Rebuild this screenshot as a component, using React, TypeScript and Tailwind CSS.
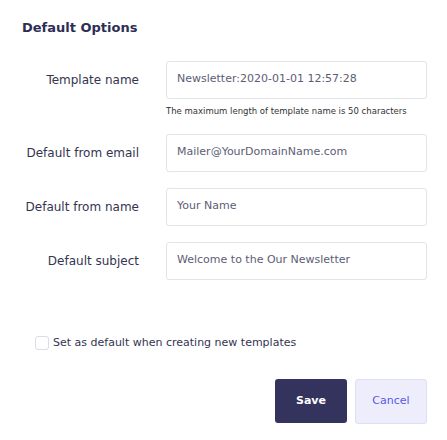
import React from 'react'

const fields = [
  { label: 'Template name', value: 'Newsletter:2020-01-01 12:57:28' },
  { label: 'Default from email', value: 'Mailer@YourDomainName.com' },
  { label: 'Default from name', value: 'Your Name' },
  { label: 'Default subject', value: 'Welcome to the Our Newsletter' },
]

function Field({ label, value }: { label: string; value: string }) {
  return (
    <div className="flex items-center">
      <label className="w-[139px] shrink-0 text-right text-[12px] text-[#34344f]">{label}</label>
      <div className="ml-[27px] flex h-[38px] w-[261px] items-center rounded-[3px] border border-[#e3e3ea] px-[10px] text-[11px] text-[#5d5d75]">
        {value}
      </div>
    </div>
  )
}

export default function App() {
  return (
    <div className="h-[440px] w-[447px] bg-white font-['DejaVu_Sans',sans-serif]">
      <div className="pt-[18px] pl-[22px] text-[13px] font-bold text-[#2e2e55]">Default Options</div>

      <div className="mt-[23px]">
        <Field {...fields[0]} />
        <div className="mt-[7px] ml-[166px] text-[8.5px] leading-[10px] text-[#333]">
          The maximum length of template name is 50 characters
        </div>
        <div className="mt-[18px] flex flex-col gap-[16px]">
          {fields.slice(1).map((f) => (
            <Field key={f.label} {...f} />
          ))}
        </div>
      </div>

      <label className="mt-[55px] ml-[35px] flex items-center gap-[4px] text-[11px] text-[#34344f]">
        <span className="h-[14px] w-[14px] rounded-[3px] border border-[#dcdce4]" />
        Set as default when creating new templates
      </label>

      <div className="mt-[28px] mr-[20px] flex justify-end gap-[8px]">
        <button className="h-[44px] w-[72px] rounded-[3px] bg-[#33335e] text-[11px] font-bold text-white">
          Save
        </button>
        <button className="h-[45px] w-[72px] rounded-[3px] border border-[#dedef5] bg-[#ededfc] text-[11px] text-[#5a5ae6]">
          Cancel
        </button>
      </div>
    </div>
  )
}
